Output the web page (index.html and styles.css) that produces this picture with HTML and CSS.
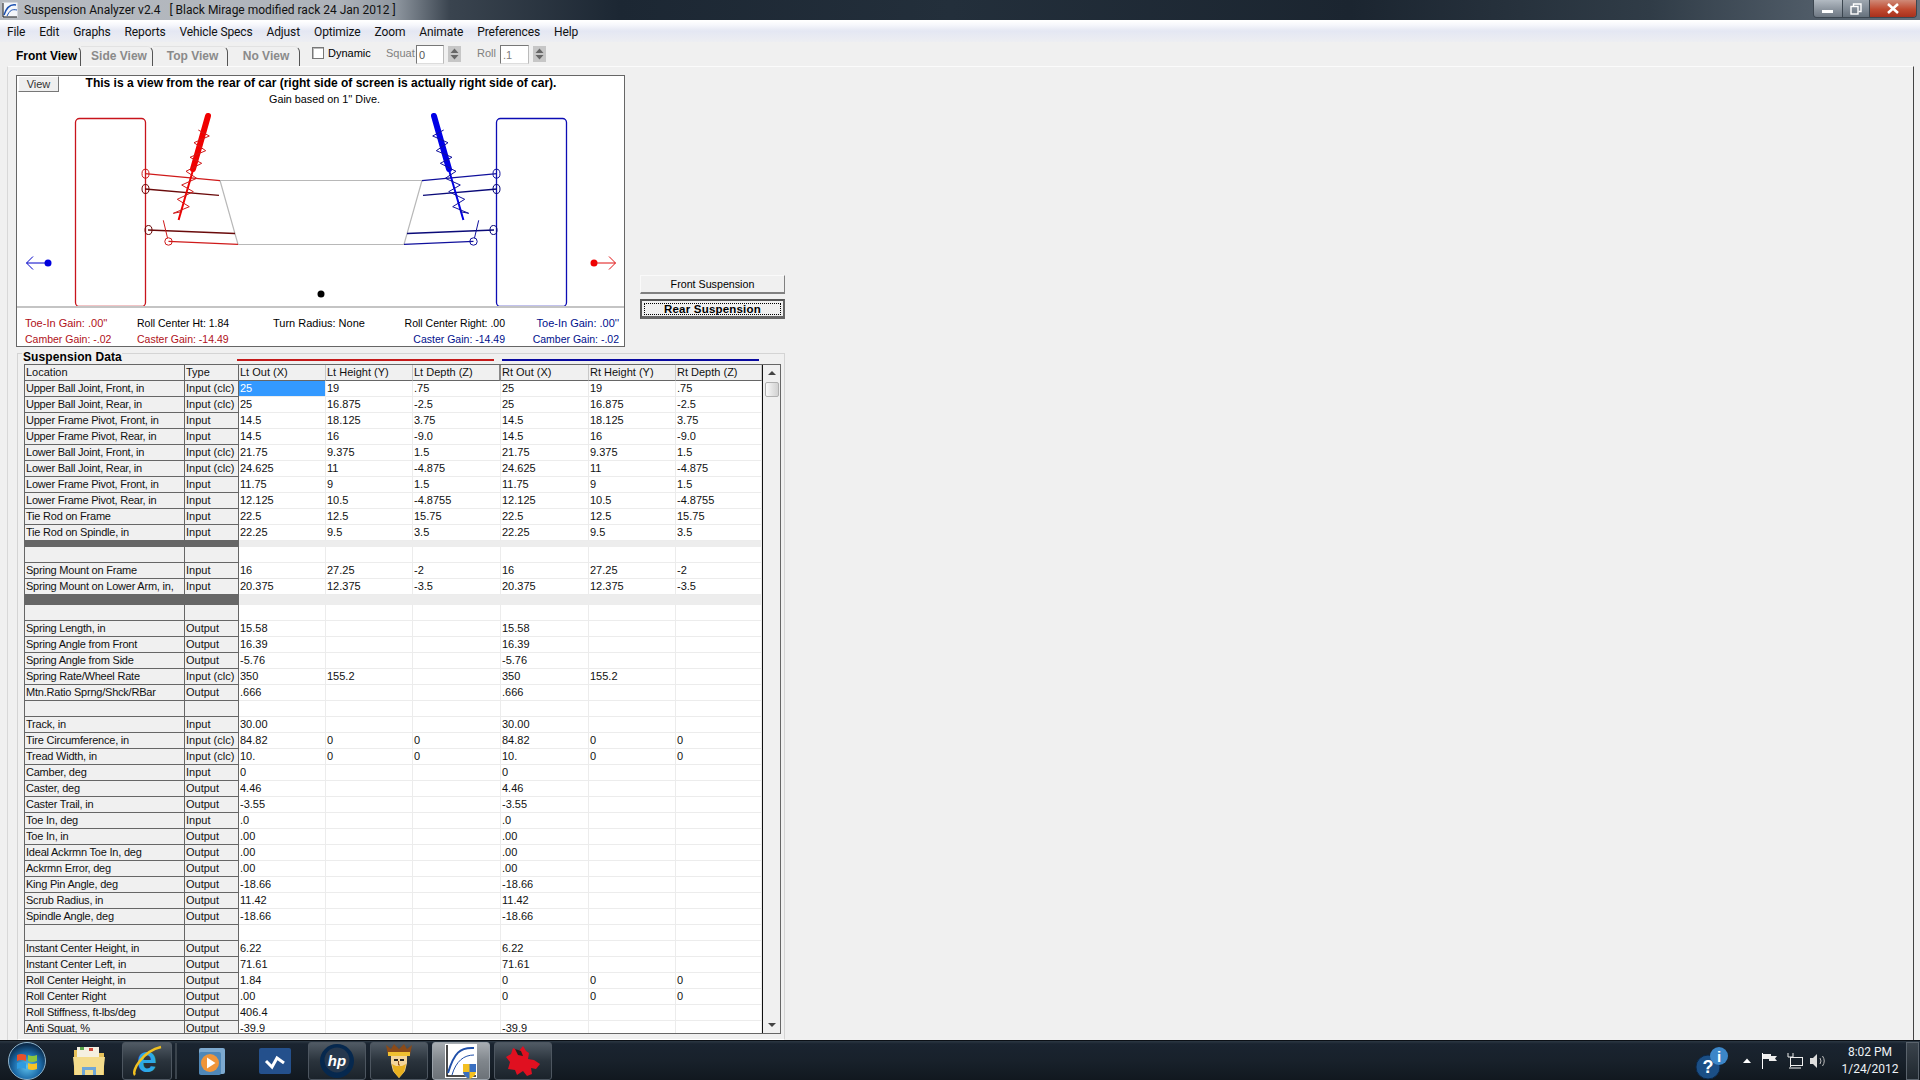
FILE: index.html
```html
<!DOCTYPE html>
<html lang="en">
<head>
<meta charset="utf-8">
<title>Suspension Analyzer v2.4</title>
<link rel="stylesheet" href="styles.css">
</head>
<body>
<header class="titlebar">
  <svg class="app-ico" viewBox="0 0 16 16"><rect x="0.5" y="0.5" width="15" height="15" fill="#f4f6fa"/><path d="M1 15V1M1 15h14" stroke="#111" fill="none"/><path d="M2 13C5 4 9 2 14 3" stroke="#1a4fb0" stroke-width="1.5" fill="none"/><path d="M5 14C8 8 10 7 15 8" stroke="#1a4fb0" fill="none"/></svg>
  <span class="title-text">Suspension Analyzer v2.4 &nbsp; [ Black Mirage modified rack 24 Jan 2012 ]</span>
  <div class="win-btns">
    <div class="wb wb-min"><svg width="12" height="5" viewBox="0 0 12 5"><rect width="11" height="3" y="1" fill="#fff"/></svg></div>
    <div class="wb wb-max"><svg width="12" height="12" viewBox="0 0 12 12" fill="none" stroke="#fff" stroke-width="1.4"><rect x="1" y="3.5" width="7" height="7.5"/><path d="M3.5 3V1H11V8.500H8.500"/></svg></div>
    <div class="wb wb-close"><svg width="14" height="11" viewBox="0 0 14 11"><path d="M2 1l10 9M12 1L2 10" stroke="#fff" stroke-width="2.600"/></svg></div>
  </div>
</header>
<nav class="menubar">
  <span class="mi">File</span><span class="mi">Edit</span><span class="mi">Graphs</span><span class="mi">Reports</span><span class="mi">Vehicle Specs</span><span class="mi">Adjust</span><span class="mi">Optimize</span><span class="mi">Zoom</span><span class="mi">Animate</span><span class="mi">Preferences</span><span class="mi">Help</span>
</nav>
<div class="toolbar">
  <div class="tabs">
    <div class="tab tab-front">Front View</div>
    <div class="tab tab-side">Side View</div>
    <div class="tab tab-top">Top View</div>
    <div class="tab tab-no">No View</div>
  </div>
  <div class="checkbox"></div>
  <span class="lbl lbl-dyn">Dynamic</span>
  <span class="lbl lbl-off lbl-squat">Squat</span>
  <div class="num"><span class="num-val">0</span></div>
  <div class="spin"><svg width="13" height="16" viewBox="0 0 13 16"><path d="M6.500 2.500L10.500 7H2.500zM6.500 13.500L10.500 9H2.500z" fill="#666"/></svg></div>
  <span class="lbl lbl-off lbl-roll">Roll</span>
  <div class="num num-off"><span class="num-val">.1</span></div>
  <div class="spin"><svg width="13" height="16" viewBox="0 0 13 16"><path d="M6.500 2.500L10.500 7H2.500zM6.500 13.500L10.500 9H2.500z" fill="#666"/></svg></div>
</div>
<main class="workspace">
  <div class="top">
    <section class="panel">
      <div class="canvas">
        <svg class="drawing" viewBox="17 76 607 230" width="607" height="230">
          <defs>
            <g id="corner" fill="none">
              <rect class="tire" x="75.500" y="118.500" width="70" height="188" rx="4"/>
              <path class="arm" d="M145 173.700L220 180.600"/>
              <ellipse class="arm thin" cx="145.500" cy="173.700" rx="3.500" ry="4.500"/>
              <path class="lowarm" d="M145 189L219 195.300"/>
              <ellipse class="lowarm thin" cx="145.500" cy="189" rx="3.500" ry="4.500"/>
              <path class="lowarm" d="M148 230L235 233.500"/>
              <ellipse class="lowarm thin" cx="148.500" cy="230" rx="3.500" ry="4.500"/>
              <path class="arm" d="M168.500 241.300L238 244.300"/>
              <circle class="arm thin" cx="168.500" cy="241.500" r="3.700"/>
              <path class="arm thin" d="M163.300 220.300L167.500 238"/>
              <path class="spring-thick" d="M208 116L193 169"/>
              <path class="spring-rod" d="M193 170L178.600 220"/>
              <polyline class="arm thin" points="198.300,130 209.300,136 194,142.700 205.700,150.700 190,157.300 201.700,163.300 186,171.300 196.700,178.300 181.700,185 193.300,191.700 177.300,199.300 189.300,206.700 173.300,213.300 181.700,211.700"/>
            </g>
          </defs>
          <path class="frame" d="M220 180.500H422L404 244.500H238Z"/>
          <use href="#corner" class="side-l"/>
          <use href="#corner" class="side-r" transform="translate(642 0) scale(-1 1)"/>
          <g class="arrow-blue"><circle cx="48" cy="263" r="3.500"/><path d="M48 263H26.500M33 256.500L26.500 263L33 269.500"/></g>
          <g class="arrow-red"><circle cx="594" cy="263" r="3.500"/><path d="M594 263H615.500M609 256.500L615.500 263L609 269.500"/></g>
          <circle cx="321" cy="294" r="3.500" fill="#000"/>
        </svg>
        <div class="canvas-head">
          <div class="note-bold">This is a view from the rear of car (right side of screen is actually right side of car).</div>
          <div class="note">Gain based on 1'' Dive.</div>
        </div>
        <div class="view-btn">View</div>
      </div>
      <div class="readouts">
        <span class="r-red r-wide">Toe-In Gain: .00''</span><span>Roll Center Ht: 1.84</span><span class="r-wide">Turn Radius: None</span><span class="r-end">Roll Center Right: .00</span><span class="r-end r-blue r-wide">Toe-In Gain: .00''</span>
        <span class="r-red">Camber Gain: -.02</span><span class="r-red">Caster Gain: -14.49</span><span></span><span class="r-end r-blue">Caster Gain: -14.49</span><span class="r-end r-blue">Camber Gain: -.02</span>
      </div>
    </section>
    <div class="side-btns">
      <div class="push">Front Suspension</div>
      <div class="push push-def"><span class="focus">Rear Suspension</span></div>
    </div>
  </div>
  <section class="group">
    <div class="group-head">
      <span class="legend">Suspension Data</span>
      <span class="bar bar-red"></span>
      <span class="bar bar-blue"></span>
    </div>
    <div class="grid-wrap">
      <div class="grid-scroll">
      <table class="grid">
        <colgroup><col class="c1"><col class="c2"><col class="c3"><col class="c3"><col class="c4"><col class="c4"><col class="c3"><col class="c5"></colgroup>
        <tr class="hd"><th>Location</th><th>Type</th><th>Lt Out (X)</th><th>Lt Height (Y)</th><th class="dbl">Lt Depth (Z)</th><th>Rt Out (X)</th><th>Rt Height (Y)</th><th>Rt Depth (Z)</th></tr>
        <tr><th>Upper Ball Joint, Front, in</th><th>Input (clc)</th><td class="sel">25</td><td>19</td><td>.75</td><td>25</td><td>19</td><td>.75</td></tr>
        <tr><th>Upper Ball Joint, Rear, in</th><th>Input (clc)</th><td>25</td><td>16.875</td><td>-2.5</td><td>25</td><td>16.875</td><td>-2.5</td></tr>
        <tr><th>Upper Frame Pivot, Front, in</th><th>Input</th><td>14.5</td><td>18.125</td><td>3.75</td><td>14.5</td><td>18.125</td><td>3.75</td></tr>
        <tr><th>Upper Frame Pivot, Rear, in</th><th>Input</th><td>14.5</td><td>16</td><td>-9.0</td><td>14.5</td><td>16</td><td>-9.0</td></tr>
        <tr><th>Lower Ball Joint, Front, in</th><th>Input (clc)</th><td>21.75</td><td>9.375</td><td>1.5</td><td>21.75</td><td>9.375</td><td>1.5</td></tr>
        <tr><th>Lower Ball Joint, Rear, in</th><th>Input (clc)</th><td>24.625</td><td>11</td><td>-4.875</td><td>24.625</td><td>11</td><td>-4.875</td></tr>
        <tr><th>Lower Frame Pivot, Front, in</th><th>Input</th><td>11.75</td><td>9</td><td>1.5</td><td>11.75</td><td>9</td><td>1.5</td></tr>
        <tr><th>Lower Frame Pivot, Rear, in</th><th>Input</th><td>12.125</td><td>10.5</td><td>-4.8755</td><td>12.125</td><td>10.5</td><td>-4.8755</td></tr>
        <tr><th>Tie Rod on Frame</th><th>Input</th><td>22.5</td><td>12.5</td><td>15.75</td><td>22.5</td><td>12.5</td><td>15.75</td></tr>
        <tr><th>Tie Rod on Spindle, in</th><th>Input</th><td>22.25</td><td>9.5</td><td>3.5</td><td>22.25</td><td>9.5</td><td>3.5</td></tr>
        <tr class="dark d6"><th></th><th></th><td></td><td></td><td></td><td></td><td></td><td></td></tr>
        <tr><th></th><th></th><td></td><td></td><td></td><td></td><td></td><td></td></tr>
        <tr><th>Spring Mount on Frame</th><th>Input</th><td>16</td><td>27.25</td><td>-2</td><td>16</td><td>27.25</td><td>-2</td></tr>
        <tr><th>Spring Mount on Lower Arm, in,</th><th>Input</th><td>20.375</td><td>12.375</td><td>-3.5</td><td>20.375</td><td>12.375</td><td>-3.5</td></tr>
        <tr class="dark d11"><th></th><th></th><td></td><td></td><td></td><td></td><td></td><td></td></tr>
        <tr><th></th><th></th><td></td><td></td><td></td><td></td><td></td><td></td></tr>
        <tr><th>Spring Length, in</th><th>Output</th><td>15.58</td><td></td><td></td><td>15.58</td><td></td><td></td></tr>
        <tr><th>Spring Angle from Front</th><th>Output</th><td>16.39</td><td></td><td></td><td>16.39</td><td></td><td></td></tr>
        <tr><th>Spring Angle from Side</th><th>Output</th><td>-5.76</td><td></td><td></td><td>-5.76</td><td></td><td></td></tr>
        <tr><th>Spring Rate/Wheel Rate</th><th>Input (clc)</th><td>350</td><td>155.2</td><td></td><td>350</td><td>155.2</td><td></td></tr>
        <tr><th>Mtn.Ratio Sprng/Shck/RBar</th><th>Output</th><td>.666</td><td></td><td></td><td>.666</td><td></td><td></td></tr>
        <tr><th></th><th></th><td></td><td></td><td></td><td></td><td></td><td></td></tr>
        <tr><th>Track, in</th><th>Input</th><td>30.00</td><td></td><td></td><td>30.00</td><td></td><td></td></tr>
        <tr><th>Tire Circumference, in</th><th>Input (clc)</th><td>84.82</td><td>0</td><td>0</td><td>84.82</td><td>0</td><td>0</td></tr>
        <tr><th>Tread Width, in</th><th>Input (clc)</th><td>10.</td><td>0</td><td>0</td><td>10.</td><td>0</td><td>0</td></tr>
        <tr><th>Camber, deg</th><th>Input</th><td>0</td><td></td><td></td><td>0</td><td></td><td></td></tr>
        <tr><th>Caster, deg</th><th>Output</th><td>4.46</td><td></td><td></td><td>4.46</td><td></td><td></td></tr>
        <tr><th>Caster Trail, in</th><th>Output</th><td>-3.55</td><td></td><td></td><td>-3.55</td><td></td><td></td></tr>
        <tr><th>Toe In, deg</th><th>Input</th><td>.0</td><td></td><td></td><td>.0</td><td></td><td></td></tr>
        <tr><th>Toe In, in</th><th>Output</th><td>.00</td><td></td><td></td><td>.00</td><td></td><td></td></tr>
        <tr><th>Ideal Ackrmn Toe In, deg</th><th>Output</th><td>.00</td><td></td><td></td><td>.00</td><td></td><td></td></tr>
        <tr><th>Ackrmn Error, deg</th><th>Output</th><td>.00</td><td></td><td></td><td>.00</td><td></td><td></td></tr>
        <tr><th>King Pin Angle, deg</th><th>Output</th><td>-18.66</td><td></td><td></td><td>-18.66</td><td></td><td></td></tr>
        <tr><th>Scrub Radius, in</th><th>Output</th><td>11.42</td><td></td><td></td><td>11.42</td><td></td><td></td></tr>
        <tr><th>Spindle Angle, deg</th><th>Output</th><td>-18.66</td><td></td><td></td><td>-18.66</td><td></td><td></td></tr>
        <tr><th></th><th></th><td></td><td></td><td></td><td></td><td></td><td></td></tr>
        <tr><th>Instant Center Height, in</th><th>Output</th><td>6.22</td><td></td><td></td><td>6.22</td><td></td><td></td></tr>
        <tr><th>Instant Center Left, in</th><th>Output</th><td>71.61</td><td></td><td></td><td>71.61</td><td></td><td></td></tr>
        <tr><th>Roll Center Height, in</th><th>Output</th><td>1.84</td><td></td><td></td><td>0</td><td>0</td><td>0</td></tr>
        <tr><th>Roll Center Right</th><th>Output</th><td>.00</td><td></td><td></td><td>0</td><td>0</td><td>0</td></tr>
        <tr><th>Roll Stiffness, ft-lbs/deg</th><th>Output</th><td>406.4</td><td></td><td></td><td></td><td></td><td></td></tr>
        <tr><th>Anti Squat, %</th><th>Output</th><td>-39.9</td><td></td><td></td><td>-39.9</td><td></td><td></td></tr>
      </table>
      </div>
      <div class="scrollbar">
        <svg class="sb-arrow" width="16" height="14" viewBox="0 0 16 14"><path d="M8 5L12 9H4z" fill="#444"/></svg>
        <div class="sb-thumb"></div>
        <svg class="sb-arrow sb-down" width="16" height="14" viewBox="0 0 16 14"><path d="M8 9L12 5H4z" fill="#444"/></svg>
      </div>
    </div>
  </section>
</main>
<footer class="taskbar">
  <svg class="orb" width="54" height="39" viewBox="0 0 54 39">
    <defs><radialGradient id="og" cx="50%" cy="65%" r="60%"><stop offset="0" stop-color="#5fc3ee"/><stop offset="0.6" stop-color="#1b6aa8"/><stop offset="1" stop-color="#0c2c4c"/></radialGradient></defs>
    <circle cx="27" cy="20" r="18.500" fill="url(#og)" stroke="#8fb4cc"/>
    <path d="M17 14q4-2 9 0v6q-5-2-9 0z" fill="#e8502a"/><path d="M28 14q4 2 9 0v6q-5 2-9 0z" fill="#8cc63f"/><path d="M17 22q4-2 9 0v6q-5-2-9 0z" fill="#2f9be0"/><path d="M28 22q4 2 9 0v6q-5 2-9 0z" fill="#f7c326"/>
  </svg>
  <div class="task t-folder"><svg width="36" height="34" viewBox="0 0 36 34"><path d="M3 6h13l3 3h14v22H3z" fill="#e8c25a"/><rect x="6" y="3" width="22" height="10" fill="#f5f0e0"/><rect x="9" y="3" width="4" height="3" fill="#5aa84a"/><rect x="18" y="4" width="4" height="3" fill="#d04a3a"/><path d="M2 13h32l-2 18H4z" fill="#f4dc8c"/><path d="M11 31v-8h14v8h-3v-5h-8v5z" fill="#6ea7d8"/></svg></div>
  <div class="task task-on t-ie"><svg width="36" height="36" viewBox="0 0 36 36"><text x="18" y="29" class="ie-e">e</text><path d="M6 32C2 28 14 8 32 4" fill="none" stroke="#f0c020" stroke-width="2.500"/></svg></div>
  <div class="tb-sep"></div>
  <div class="task t-media"><svg width="32" height="34" viewBox="0 0 32 34"><rect x="3" y="4" width="26" height="26" rx="2" fill="#7da9cf"/><rect x="3" y="8" width="22" height="23" rx="2" fill="#5088b8"/><circle cx="14" cy="19" r="9" fill="#f0953a"/><path d="M11 13.500L19.500 19L11 24.500z" fill="#fff"/></svg></div>
  <div class="task t-check"><svg width="34" height="30" viewBox="0 0 34 30"><rect x="1" y="2" width="32" height="26" rx="2" fill="#24508c"/><path d="M8 15l6 6 5-9 7 5" fill="none" stroke="#fff" stroke-width="3"/></svg></div>
  <div class="task task-on t-hp"><svg width="36" height="36" viewBox="0 0 36 36"><circle cx="18" cy="18" r="17" fill="#06284e"/><circle cx="18" cy="17" r="12.500" fill="#26384e"/><text x="18" y="23" class="hp-t">hp</text></svg></div>
  <div class="task task-on t-king"><svg width="30" height="36" viewBox="0 0 30 36"><path d="M2 2l5 4 3-5 5 5 5-5 3 5 5-4-2 10H4z" fill="#8a4a18"/><rect x="4" y="9" width="22" height="4" fill="#f0c030"/><path d="M7 13h16v7l-2 8-6 7-6-7-2-8z" fill="#f4d59a"/><path d="M8 21l4 2h6l4-2-2 8-5 6-5-6z" fill="#e8b020"/><path d="M10 16h4v2h-4zM16 16h4v2h-4z" fill="#222"/><path d="M14.500 18v4h1.500" stroke="#8a4a18" fill="none"/></svg></div>
  <div class="task task-active t-app"><svg width="34" height="36" viewBox="0 0 34 36"><rect x="1" y="1" width="32" height="34" fill="#fff"/><path d="M3 2v31h29" fill="none" stroke="#111" stroke-width="1.500"/><path d="M4 30C10 10 16 4 30 5" fill="none" stroke="#1f4fa8" stroke-width="2"/><path d="M8 32C12 18 20 12 30 12" fill="none" stroke="#1f4fa8"/><path d="M19 21h13v8q-1 5-6.500 7-5.500-2-6.500-7z" fill="#f4c020"/><path d="M25.500 21h6.500v8H25.500zM19 29h6.500v7q-5.500-2-6.500-7z" fill="#3a6fc0"/></svg></div>
  <div class="task task-on t-splat"><svg width="38" height="36" viewBox="0 0 38 36"><path d="M9 5l6 3 4-5 3 5 3 2-1 6 6 1 6 4-4 5-5-1 1 6-5 2-4-5-6 4-2-5-7-1 2-7-4-5 5-3z" fill="#e01020"/><path d="M11 6l6 2 2 5-5-1z" fill="#222"/></svg></div>
  <div class="tray">
    <svg class="t-help" width="34" height="38" viewBox="0 0 34 38"><circle cx="14" cy="25" r="12" fill="#1b4f86" stroke="#0b2748"/><text x="14" y="31" class="help-q">?</text><circle cx="25" cy="14" r="9" fill="#3c86c8"/><text x="25" y="19.500" class="help-i">i</text></svg>
    <svg class="t-up" width="14" height="10" viewBox="0 0 14 10"><path d="M7 2.500L11 7H3z" fill="#fff"/></svg>
    <svg class="t-flag" width="20" height="18" viewBox="0 0 20 18"><path d="M2.500 1V17" stroke="#fff"/><path d="M3 2h8v2h6l-2 2.500 2 2.500H9V7H3z" fill="#eee"/></svg>
    <svg class="t-net" width="20" height="18" viewBox="0 0 20 18" fill="none" stroke="#eee"><path d="M3 1v4h5V1M5.500 5v10"/><rect x="5.500" y="5.500" width="12" height="8"/><path d="M4 16h12"/></svg>
    <svg class="t-spk" width="20" height="18" viewBox="0 0 20 18"><path d="M2 6h3l4-4v14l-4-4H2z" fill="#ddd"/><path d="M12 6q2 3 0 6M14.500 4q3.500 5 0 10" stroke="#bbb" fill="none"/></svg>
    <div class="clock"><span>8:02 PM</span><span>1/24/2012</span></div>
    <div class="show-desk"></div>
  </div>
</footer>
</body>
</html>
```
FILE: styles.css
```css
* { box-sizing: border-box; }
html, body { margin: 0; padding: 0; }
body {
  width: 1920px; height: 1080px; overflow: hidden;
  display: flex; flex-direction: column;
  background: #f0f0f0; color: #000;
  font: 11px/15px "Liberation Sans", Arial, sans-serif;
}

/* title bar */
.titlebar {
  height: 20px; flex: none; display: flex; align-items: center;
  padding-left: 2px;
  background: linear-gradient(90deg, #b7bbc1 0, #aeb3ba 340px, #8f97a0 395px, #3a444f 450px, #1c2733 620px, #232f3b 950px, #1b2530 1350px, #303c47 1650px, #4f5b67 1810px, #66727e 1920px);
  font: 12px/16px Roboto, sans-serif;
}
.app-ico { width: 16px; height: 16px; flex: none; }
.title-text { margin-left: 6px; color: #111; white-space: pre; }
.win-btns { margin-left: auto; display: flex; height: 18px; align-self: flex-start; margin-right: 3px; border: 1px solid #3c4650; border-top: 0; border-radius: 0 0 4px 4px; overflow: hidden; }
.wb { display: flex; align-items: center; justify-content: center; }
.wb-min { width: 28px; background: linear-gradient(#b2bac2, #8b949e 55%, #6f7984); padding-top: 5px; }
.wb-max { width: 27px; background: linear-gradient(#9ea7b0, #808a95 55%, #66717c); border-left: 1px solid #3c4650; }
.wb-close { width: 47px; background: linear-gradient(#cf8a78, #c04a30 55%, #a8301c); border-left: 1px solid #3c4650; }

/* menu */
.menubar {
  height: 22px; flex: none; display: flex; align-items: center; gap: 14px;
  padding-left: 7px; border-top: 1px solid #fff;
  background: linear-gradient(#fff 0, #f6f7fc 4px, #e4e7f3 10px, #edeef2 100%);
  font: 12px/16px Roboto, sans-serif; letter-spacing: -.12px; color: #111;
}

/* tool row */
.toolbar { height: 24px; flex: none; display: flex; align-items: flex-start; }
.tabs { display: flex; margin-left: 8px; align-self: flex-end; }
.tab {
  height: 20px; line-height: 19px; padding-left: 5px; text-align: center; font-size: 12px; font-weight: 700; color: #8a8a8a;
  border-right: 1px solid #555; border-top: 1px solid #e2e2e2; border-top-right-radius: 6px; white-space: nowrap;
}
.tab-front { width: 73px; color: #000; border-top-color: #f0f0f0; }
.tab-side { width: 72px; }
.tab-top { width: 75px; }
.tab-no { width: 72px; }
.checkbox { width: 12px; height: 12px; margin: 5px 0 0 12px; background: #fff; border: 1px solid #777; box-shadow: inset 1px 1px 0 #bbb; }
.lbl { margin-top: 4px; }
.lbl-dyn { margin-left: 4px; width: 41px; }
.lbl-off { color: #808080; }
.lbl-squat { margin-left: 17px; width: 30px; }
.lbl-roll { margin-left: 16px; width: 23px; }
.num { width: 28px; height: 19px; margin-top: 3px; padding: 2px 0 0 2px; background: #fff; border: 1px solid #777; border-right-color: #bbb; border-bottom-color: #ddd; text-align: left; }
.num-val { color: #555; }
.num-off { width: 29px; }
.num-off .num-val { color: #808080; }
.spin { width: 13px; height: 16px; margin: 4px 0 0 4px; background: #c6c6c6; border: 0; }

/* workspace */
.workspace {
  flex: 1; min-height: 0; margin: 0 6px 0 7px;
  padding: 8px 0 0 8px;
  border-left: 1px solid #d8d8d8; border-top: 1px solid #fbfbfb; border-right: 1px solid #444;
}
.top { display: flex; gap: 15px; height: 272px; }
.panel { width: 609px; height: 272px; flex: none; border: 1px solid #666; background: #fff; display: flex; flex-direction: column; }
.canvas { position: relative; height: 230px; flex: none; }
.drawing { display: block; }
.view-btn { position: absolute; left: 1px; top: 0; width: 41px; height: 16px; line-height: 14px; text-align: center; color: #333; background: #efefef; border: 1px solid; border-color: #fff #777 #777 #fff; }
.canvas-head { position: absolute; left: 0; right: 0; top: 0; text-align: center; pointer-events: none; }
.note-bold { font-weight: 700; font-size: 12px; line-height: 14px; margin-right: -1px; }
.note { margin-top: 2px; margin-right: -8px; font-size: 10.800px; }
.readouts {
  flex: 1; border-top: 2px solid #c4c4c4; padding: 7px 5px 0 8px;
  display: grid; grid-template-columns: 112px 136px 122px 110px 1fr; grid-auto-rows: 16px;
  white-space: nowrap; font-size: 10.500px; line-height: 16px;
}
.r-wide { font-size: 11px; }
.r-red { color: #b01018; }
.r-blue { color: #00108c; }
.r-end { text-align: right; }
.side-btns { align-self: flex-end; margin-bottom: 28px; width: 145px; display: flex; flex-direction: column; gap: 5px; }
.push { height: 19px; line-height: 16px; text-align: center; font-size: 10.700px; background: #f0f0f0; border: 1px solid; border-color: #fafafa #808080 #808080 #fafafa; border-bottom-width: 2px; }
.push-def { height: 20px; padding: 2px; border: 2px solid; border-color: #555 #666 #666 #555; border-bottom-width: 3px; font-weight: 700; font-size: 11.500px; line-height: 11px; }
.focus { display: block; height: 12px; border: 1px dotted #000; letter-spacing: .2px; }

/* group */
.group { width: 768px; margin: 6px 0 0 1px; border: 1px solid #d4d4d4; border-bottom-color: #fff; padding: 0 3px 6px 6px; height: 687px; }
.group-head { height: 10px; display: flex; align-items: flex-start; }
.legend { width: 100px; margin: -4px 0 0 -2px; height: 14px; padding-left: 1px; background: #f0f0f0; font-weight: 700; font-size: 12px; letter-spacing: .1px; line-height: 14px; flex: none; white-space: nowrap; }
.bar { height: 2px; margin-top: 5px; width: 257px; flex: none; }
.bar-red { margin-left: 115px; background: #c41a1a; }
.bar-blue { margin-left: 8px; background: #0a0aa0; }
.grid-wrap { display: flex; width: 757px; height: 670px; border: 1px solid #666; overflow: hidden; background: #fff; }
.grid-scroll { width: 737px; flex: none; overflow: hidden; }
.grid { border-collapse: separate; border-spacing: 0; table-layout: fixed; width: 737px; white-space: nowrap; font-size: 11px; }
.c1 { width: 160px; } .c2 { width: 54px; } .c3 { width: 87px; } .c4 { width: 88px; } .c5 { width: 86px; }
.grid tr { height: 16px; }
.grid th, .grid td { height: 16px; padding: 0 0 0 1px; line-height: 15px; font-weight: 400; text-align: left; overflow: hidden; color: #111; }
.grid th { background: #f0f0f0; border-right: 1px solid #666; border-bottom: 1px solid #666; }
.grid th:first-child { letter-spacing: -.22px; }
.grid td { border-right: 1px solid #ececec; border-bottom: 1px solid #ececec; }
.grid .hd th { border-bottom-color: #666; border-right-color: #c8c8c8; letter-spacing: 0; }
.grid .hd th:nth-child(-n+2) { border-right-color: #666; }
.grid .hd .dbl { border-right: 2px solid #888; }
.grid td.sel { background: #3399ff; color: #fff; }
.grid .dark th, .grid .dark td { padding: 0; border: 0; line-height: 0; }
.grid .dark th { background: #666; }
.grid .dark td { background: #ededed; }
.grid .d6, .grid .d6 th, .grid .d6 td { height: 6px; }
.grid .d11, .grid .d11 th, .grid .d11 td { height: 10px; }

/* scrollbar */
.scrollbar { width: 18px; flex: none; display: flex; flex-direction: column; align-items: center; background: #f0f0f0; border-left: 1px solid #111; padding-top: 1px; }
.sb-arrow { flex: none; }
.sb-down { margin-top: auto; margin-bottom: 1px; }
.sb-thumb { width: 14px; height: 15px; margin-top: 2px; background: linear-gradient(90deg, #fbfbfb, #e4e4e4 50%, #d2d2d2); border: 1px solid #b0b0b0; border-radius: 2px; }

/* drawing */
.side-l { --tire: #c8141c; --arm: #cf1a1a; --low: #6a0a0a; --spring: #f00000; }
.side-r { --tire: #0c0cb4; --arm: #10109c; --low: #0a0a78; --spring: #0000e6; }
.tire { stroke: var(--tire); stroke-width: 1.300; }
.arm { stroke: var(--arm); stroke-width: 1.300; }
.lowarm { stroke: var(--low); stroke-width: 1.300; }
.thin { stroke-width: 1; }
.spring-thick { stroke: var(--spring); stroke-width: 6; stroke-linecap: round; }
.spring-rod { stroke: var(--spring); stroke-width: 2; }
.frame { fill: none; stroke: #b8b8b8; stroke-width: 1.200; }
.arrow-blue { fill: #0000e0; }
.arrow-blue path { fill: none; stroke: #0000c8; }
.arrow-red { fill: #f00000; }
.arrow-red path { fill: none; stroke: #e01010; }

/* taskbar */
.taskbar {
  height: 40px; flex: none; display: flex; align-items: center;
  background: linear-gradient(#2c3843 0, #1a2430 3px, #18212b 50%, #11181f 100%);
  border-top: 1px solid #0b1016; padding-right: 1px;
}
.orb { flex: none; }
.task { width: 58px; height: 38px; flex: none; display: flex; align-items: center; justify-content: center; margin-left: 4px; border-radius: 3px; }
.task-on { border: 1px solid #4d5660; background: linear-gradient(#505a64, #2a333c 50%, #1b232b); }
.task-active { border: 1px solid #9aa2aa; background: linear-gradient(#a8adb2, #80868c 50%, #6c7278); }
.t-folder { margin-left: 6px; }
.t-ie { width: 50px; }
.tb-sep { width: 2px; height: 36px; margin-left: 3px; background: #3a434c; flex: none; }
.t-media { margin-left: 6px; }
.t-check { margin-left: 5px; }
.ie-e { font: 700 36px "Liberation Sans", sans-serif; fill: #2da8e6; text-anchor: middle; }
.hp-t { font: italic 700 15px "Liberation Sans", sans-serif; fill: #fff; text-anchor: middle; }
.help-q { font: 700 18px "Liberation Sans", sans-serif; fill: #fff; text-anchor: middle; }
.help-i { font: 700 15px "Liberation Sans", sans-serif; fill: #fff; text-anchor: middle; }
.tray { margin-left: auto; display: flex; align-items: center; }
.t-help { margin-right: 12px; flex: none; }
.t-up { flex: none; margin-right: 6px; }
.t-flag { flex: none; margin-right: 5px; }
.t-net { flex: none; margin-right: 3px; }
.t-spk { flex: none; margin-right: 12px; }
.clock { width: 60px; display: flex; flex-direction: column; align-items: center; gap: 1px; color: #eef2f6; font: 12px/16px Roboto, sans-serif; margin-right: 6px; white-space: nowrap; }
.show-desk { width: 13px; height: 38px; border: 1px solid #5a636c; background: linear-gradient(#3a434c, #20282f); }
```
